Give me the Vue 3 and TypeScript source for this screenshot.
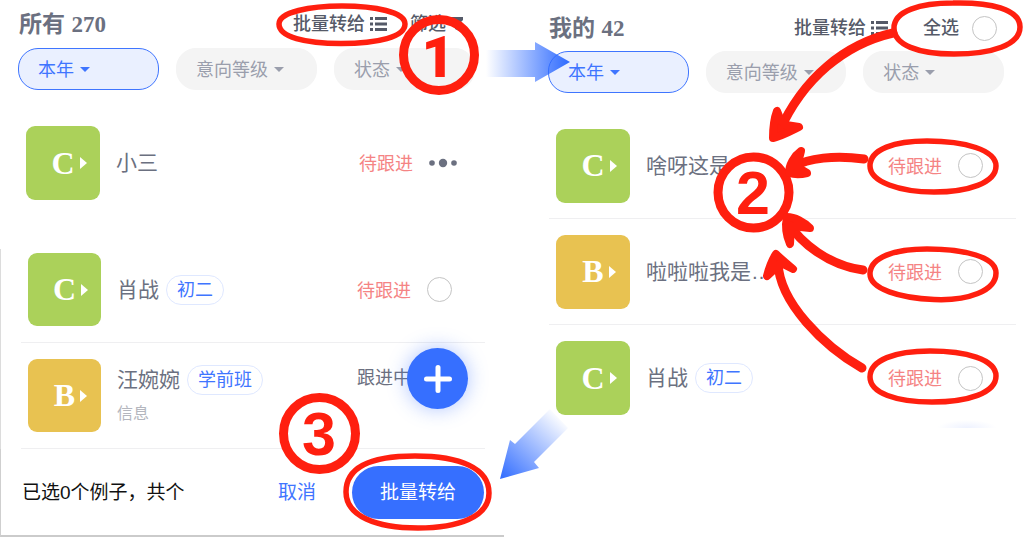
<script setup lang="ts">
import { ref } from 'vue'

interface Lead {
  id: string
  grade: 'B' | 'C'
  name: string
  tag?: string
  note?: string
  status: string
  pending: boolean
  control: 'more' | 'check' | 'none'
}

const filters = ['本年', '意向等级', '状态']

const topLeads: Lead[] = [
  { id: 'a1', grade: 'C', name: '小三', status: '待跟进', pending: true, control: 'more' },
]

const pickLeads: Lead[] = [
  { id: 'b1', grade: 'C', name: '肖战', tag: '初二', status: '待跟进', pending: true, control: 'check' },
  { id: 'b2', grade: 'B', name: '汪婉婉', tag: '学前班', note: '信息', status: '跟进中', pending: false, control: 'none' },
]

const myLeads: Lead[] = [
  { id: 'c1', grade: 'C', name: '啥呀这是…', status: '待跟进', pending: true, control: 'check' },
  { id: 'c2', grade: 'B', name: '啦啦啦我是…', status: '待跟进', pending: true, control: 'check' },
  { id: 'c3', grade: 'C', name: '肖战', tag: '初二', status: '待跟进', pending: true, control: 'check' },
]

const groups = [
  { key: 'top', leads: topLeads },
  { key: 'pick', leads: pickLeads },
]

const checked = ref<string[]>([])
const allChecked = ref(false)
</script>

<template>
  <main class="board">
    <section class="panel panel-all">
      <header class="head">
        <h1 class="title">所有 <span class="count">270</span></h1>
        <button class="action" type="button">
          批量转给
          <svg class="list-icon" viewBox="0 0 17 14" aria-hidden="true">
            <path d="M0 0h3v3H0zM0 5.5h3v3H0zM0 11h3v3H0zM5 0h12v3H5zM5 5.5h12v3H5zM5 11h12v3H5z" />
          </svg>
        </button>
        <button class="action filter-action" type="button">
          筛选
          <svg class="funnel-icon" viewBox="0 0 12 14" aria-hidden="true">
            <path d="M0 0h12v3L8 7v7l-4-2V7L0 3z" />
          </svg>
        </button>
      </header>
      <nav class="pills">
        <button v-for="(f, i) in filters" :key="f" type="button" class="pill" :class="{ active: i === 0 }">
          {{ f }}<span class="caret"></span>
        </button>
      </nav>

      <ul v-for="g in groups" :key="g.key" class="leads" :class="g.key">
        <li v-for="lead in g.leads" :key="lead.id" class="lead">
          <div class="tile" :class="lead.grade === 'C' ? 'green' : 'gold'">
            {{ lead.grade }}<span class="tri"></span>
          </div>
          <div class="info">
            <div class="name-line">
              <span class="name">{{ lead.name }}</span>
              <span v-if="lead.tag" class="tag">{{ lead.tag }}</span>
            </div>
            <span v-if="lead.note" class="note">{{ lead.note }}</span>
          </div>
          <label class="state" :class="{ raised: lead.note }">
            <span class="status" :class="lead.pending ? 'pending' : 'ongoing'">{{ lead.status }}</span>
            <input v-if="lead.control === 'check'" v-model="checked" class="round" type="checkbox" :value="lead.id" />
          </label>
          <button v-if="lead.control === 'more'" class="more" type="button" aria-label="更多">
            <svg viewBox="0 0 28 10" aria-hidden="true">
              <circle cx="3" cy="5" r="2.8" /><circle cx="14" cy="5" r="4.2" /><circle cx="25" cy="5" r="2.8" />
            </svg>
          </button>
          <button v-if="lead.note" class="fab" type="button" aria-label="新增">
            <svg viewBox="0 0 28 28" aria-hidden="true"><path d="M14 2.5v23M2.5 14h23" /></svg>
          </button>
        </li>
      </ul>

      <footer class="bar">
        <span class="summary">已选{{ checked.length }}个例子，共个</span>
        <button class="cancel" type="button">取消</button>
        <button class="confirm" type="button">批量转给</button>
      </footer>
    </section>

    <section class="panel panel-mine">
      <header class="head">
        <h1 class="title">我的 <span class="count">42</span></h1>
        <button class="action" type="button">
          批量转给
          <svg class="list-icon" viewBox="0 0 17 14" aria-hidden="true">
            <path d="M0 0h3v3H0zM0 5.5h3v3H0zM0 11h3v3H0zM5 0h12v3H5zM5 5.5h12v3H5zM5 11h12v3H5z" />
          </svg>
        </button>
        <label class="action all">
          全选
          <input v-model="allChecked" class="round" type="checkbox" />
        </label>
      </header>
      <nav class="pills">
        <button v-for="(f, i) in filters" :key="f" type="button" class="pill" :class="{ active: i === 0 }">
          {{ f }}<span class="caret"></span>
        </button>
      </nav>
      <ul class="leads mine">
        <li v-for="lead in myLeads" :key="lead.id" class="lead">
          <div class="tile" :class="lead.grade === 'C' ? 'green' : 'gold'">
            {{ lead.grade }}<span class="tri"></span>
          </div>
          <div class="info">
            <div class="name-line">
              <span class="name">{{ lead.name }}</span>
              <span v-if="lead.tag" class="tag">{{ lead.tag }}</span>
            </div>
          </div>
          <label class="state">
            <span class="status pending">{{ lead.status }}</span>
            <input v-model="checked" class="round" type="checkbox" :value="lead.id" />
          </label>
        </li>
      </ul>
      <div class="glow"></div>
    </section>

    <svg class="marks" viewBox="0 0 1035 537" aria-hidden="true">
      <defs>
        <linearGradient id="flow-right" gradientUnits="userSpaceOnUse" x1="486" y1="0" x2="570" y2="0">
          <stop offset="0" stop-color="#2f6bff" stop-opacity="0" />
          <stop offset="1" stop-color="#2f6bff" />
        </linearGradient>
        <linearGradient id="flow-down" gradientUnits="userSpaceOnUse" x1="560" y1="416" x2="500" y2="479">
          <stop offset="0" stop-color="#2f6bff" stop-opacity="0" />
          <stop offset="1" stop-color="#2f6bff" />
        </linearGradient>
      </defs>
      <path fill="url(#flow-right)" d="M486 50H535V42L570 62L535 82V77H486z" />
      <path fill="url(#flow-down)" d="M550 409L568 428L534 462L539 468L500 479L510 440L515 444z" />

      <g class="ring">
        <path d="M342 6C375 6 405 12 405 24C405 37 378 43.500 341 43.500C305 43.500 279 37 279 24C279 12 310 6 342 6Z" />
        <path d="M953 3C990 2 1020 9 1020 27C1020 45 992 54 954 54C918 54 894 45 894 28C894 11 920 3 953 3Z" />
        <path d="M927 141C965 141 996 150 996 166C996 183 968 192 934 192C900 192 870 182 870 166C870 149 895 141 927 141Z" />
        <path d="M927 249C965 249 996 257 996 273C996 291 968 301 934 299.500C900 298 870 289 870 274C870 257 895 249 927 249Z" />
        <path d="M930 351C965 351 996 359 996 376C996 393 968 402 932 402C896 402 870 393 870 377C870 360 895 351 930 351Z" />
        <path d="M415 456C460 456 489 468 489 493C489 517 458 528 418 528C376 528 346 516 346 492C346 467 372 456 415 456Z" />
      </g>

      <g class="step">
        <circle class="open" cx="439" cy="55" r="35.500" />
        <text class="one" x="438" y="77">1</text>
        <circle cx="753.500" cy="192.500" r="35.500" />
        <text x="753" y="214">2</text>
        <circle cx="319.500" cy="433.500" r="36" />
        <text x="319" y="455">3</text>
      </g>

      <g class="stroke">
        <path d="M893 33C845 44 803 78 779 132" />
        <path class="head-fill" d="M777 111C774 119 773 128 773 138C782 136 791 131 799 127L786 125L781 121Z" />
        <path d="M864 159C835 155 808 158 793 167" />
        <path class="head-fill" d="M801 151C794 156 789 165 789 173C796 175 803 174 807 173L797 167Z" />
        <path d="M863 270C830 266 800 243 788 222" />
        <path class="head-fill" d="M810 228C804 222 795 217 787 217C785 226 787 237 790 244L791 226Z" />
        <path d="M862 368C825 347 779 303 778 262" />
        <path class="head-fill" d="M767 276C769 268 772 260 776 254C781 259 787 264 793 269L781 263Z" />
      </g>
    </svg>
  </main>
</template>

<style>
body {
  margin: 0;
  background: #fff;
}
</style>

<style scoped>
.board {
  position: relative;
  display: grid;
  grid-template-columns: 530fr 505fr;
  overflow: hidden;
  font-family: "Liberation Sans", "Noto Sans CJK SC", sans-serif;
  color: #6b7080;
}
.panel {
  display: flex;
  flex-direction: column;
  min-width: 0;
}
.panel-all {
  padding: 6px 0 0;
}
.panel-mine {
  padding: 10px 0 0;
}
button {
  border: 0;
  padding: 0;
  background: none;
  font: inherit;
  color: inherit;
}
.head {
  display: flex;
  align-items: center;
  height: 36px;
  padding: 0 67px 0 19px;
}
.panel-mine .head {
  padding-right: 38px;
}
.title {
  flex: 1;
  margin: 0;
  font-size: 23px;
  line-height: 36px;
  font-weight: 700;
}
.count {
  font-family: "Liberation Serif", serif;
}
.action {
  display: flex;
  align-items: center;
  gap: 5px;
  font-size: 18px;
  line-height: 36px;
  font-weight: 500;
  color: #555a68;
}
.list-icon {
  width: 17px;
  height: 14px;
  fill: currentColor;
}
.funnel-icon {
  width: 12px;
  height: 14px;
  fill: currentColor;
}
.filter-action {
  margin-left: 23px;
}
.all {
  gap: 13px;
  margin-left: 35px;
}
.round {
  appearance: none;
  box-sizing: border-box;
  width: 25px;
  height: 25px;
  margin: 0;
  border: 1px solid #c4c4c4;
  border-radius: 50%;
  background: #fff;
}
.round:checked {
  background: #366fff;
}
.pills {
  display: grid;
  grid-template-columns: repeat(3, 1fr);
  gap: 17px;
  margin: 6px 55px 0 18px;
}
.panel-mine .pills {
  margin: 5px 31px 0 18px;
}
.pill {
  display: flex;
  align-items: center;
  box-sizing: border-box;
  height: 42px;
  padding: 0 19px 2px;
  border: 1px solid #f4f4f4;
  border-radius: 20px;
  background: #f4f4f4;
  font-size: 18px;
  color: #9a9eac;
}
.pill.active {
  border-color: #3f75ff;
  background: #eaf0ff;
  color: #3f75ff;
}
.caret {
  margin: 2px 0 0 6px;
  border: 5px solid transparent;
  border-top-color: currentColor;
  border-bottom: 0;
}
.leads {
  list-style: none;
  margin: 0;
  padding: 0;
}
.lead {
  position: relative;
  display: flex;
  align-items: center;
  box-sizing: border-box;
  height: 106px;
}
.top {
  margin: 20px 73px 33px 26px;
}
.pick {
  margin-right: 45px;
  padding-left: 20px;
  border-left: 1px solid #dcdcdc;
}
.top + .pick .lead:first-child {
  height: 94px;
  padding-bottom: 12px;
}
.pick .lead {
  padding-left: 7px;
  border-bottom: 1px solid #efeff1;
}
.mine {
  margin: 20px 19px 0 19px;
}
.mine .lead {
  padding-left: 7px;
  border-bottom: 1px solid #efeff1;
}
.mine .lead:last-child {
  border-bottom: 0;
}
.tile {
  display: flex;
  align-items: center;
  justify-content: center;
  box-sizing: border-box;
  width: 74px;
  height: 74px;
  padding: 0 0 0 12px;
  border-radius: 9px;
  font: 700 32px "Liberation Serif", serif;
  color: #fff;
}
.pick .tile {
  width: 73px;
  height: 73px;
}
.green {
  background: #abd15a;
}
.gold {
  background: #e8c251;
}
.tri {
  margin-left: 5px;
  border: 6px solid transparent;
  border-left: 7px solid #fff;
  border-right: 0;
}
.info {
  flex: 1;
  padding-left: 16px;
}
.name-line {
  display: flex;
  align-items: center;
  gap: 7px;
}
.name {
  font-size: 21px;
  line-height: 30px;
}
.tag {
  padding: 0 10px;
  border: 1px solid #dfe8ff;
  border-radius: 16px;
  font-size: 18px;
  line-height: 28px;
  color: #3f75ff;
}
.note {
  display: block;
  margin-top: 7px;
  font-size: 16px;
  line-height: 24px;
  color: #b4b6be;
}
.state {
  display: flex;
  align-items: center;
  gap: 16px;
  font-size: 18px;
}
.status {
  padding-bottom: 2px;
}
.pending {
  color: #f58484;
}
.pick .state {
  width: 128px;
}
.raised {
  align-self: flex-start;
  margin-top: 20px;
}
.mine .state {
  margin-right: 33px;
}
.more {
  width: 28px;
  height: 10px;
  margin-left: 16px;
}
.more svg {
  display: block;
  fill: #6b7080;
}
.fab {
  position: absolute;
  right: 17px;
  top: 5px;
  display: grid;
  place-items: center;
  width: 61px;
  height: 61px;
  border-radius: 50%;
  background: #366fff;
  box-shadow: 0 0 20px rgba(54, 111, 255, 0.4);
}
.fab svg {
  width: 28px;
  height: 28px;
  fill: none;
  stroke: #fff;
  stroke-width: 5;
  stroke-linecap: round;
}
.bar {
  display: flex;
  align-items: center;
  box-sizing: border-box;
  height: 88px;
  margin-right: 26px;
  padding: 0 20px 0 21px;
  border-left: 1px solid #cfcfcf;
  border-bottom: 2px solid #cbcbcb;
  font-size: 19px;
}
.summary {
  flex: 1;
  padding-bottom: 3px;
  color: #111;
}
.cancel {
  padding-bottom: 3px;
  color: #3f75ff;
}
.confirm {
  width: 132px;
  height: 53px;
  margin-left: 36px;
  padding-bottom: 3px;
  border-radius: 27px;
  background: #366fff;
  color: #fff;
}
.glow {
  align-self: flex-end;
  width: 60px;
  height: 8px;
  margin: -11px 38px 0 0;
  background: radial-gradient(ellipse at bottom, #eef2ff, #fff 70%);
}
.marks {
  position: absolute;
  top: 0;
  left: 0;
  width: 100%;
  pointer-events: none;
}
.ring,
.stroke {
  fill: none;
  stroke: #ff1f0f;
  stroke-width: 5.5;
}
.stroke {
  stroke-width: 9;
  stroke-linecap: round;
  stroke-linejoin: round;
}
.head-fill {
  fill: #ff1f0f;
  stroke-width: 8;
}
.step circle {
  fill: #fff;
  stroke: #ff1f0f;
  stroke-width: 9;
}
.step .open {
  fill: none;
}
.step text {
  fill: #ff1f0f;
  font: 700 61px "Liberation Sans", sans-serif;
  text-anchor: middle;
}
.step .one {
  font: 900 57px Roboto, sans-serif;
}
</style>
